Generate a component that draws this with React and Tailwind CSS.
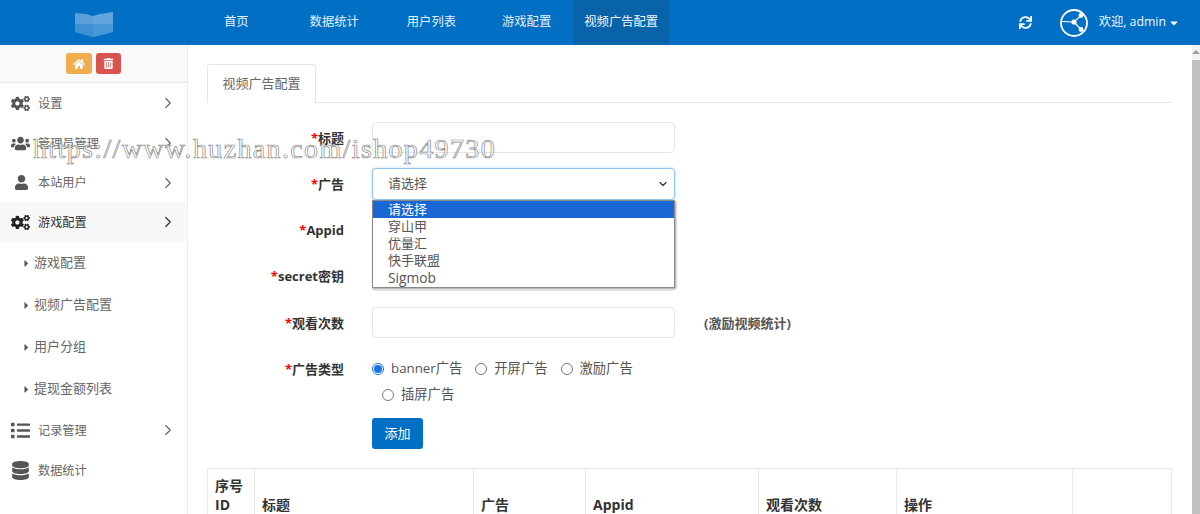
import React from 'react';
import { FaCogs, FaUsers, FaUser, FaList, FaDatabase, FaHome, FaTrashAlt, FaSync, FaCaretRight, FaCaretDown } from 'react-icons/fa';
import { ChevronRight, ChevronDown } from 'lucide-react';

const navItems = [
  { label: '首页', cls: 'ml-[111px]' },
  { label: '数据统计', cls: 'ml-[61px]' },
  { label: '用户列表', cls: 'ml-[48px]' },
  { label: '游戏配置', cls: 'ml-[46px]' },
];

function Logo() {
  return (
    <svg width="38" height="25" viewBox="0 0 38 25" className="shrink-0 ml-[75px] mt-[4px]">
      <path d="M0 1 L11 2 L18 4 L18 12 L0 12 Z" fill="#5a9fd9" />
      <path d="M18 4 L25 2 L38 0 L38 12 L18 12 Z" fill="#62a5dc" />
      <path d="M0 12 L18 12 L18 25 L10 23 L0 20 Z" fill="#3f90d3" />
      <path d="M18 12 L38 12 L38 20 L27 23 L18 25 Z" fill="#4897d6" />
    </svg>
  );
}

function ShareCircle() {
  return (
    <svg width="28" height="28" viewBox="0 0 28 28" fill="none" stroke="#fff">
      <circle cx="14" cy="14" r="13" strokeWidth="1.8" />
      <path d="M1.5 12.5 L14 13 L21 6.5 M14 13 L21 20.5" strokeWidth="1.1" />
      <circle cx="14" cy="13" r="2.6" fill="#fff" stroke="none" />
      <circle cx="21" cy="6.5" r="2.4" fill="#fff" stroke="none" />
      <circle cx="21" cy="20.5" r="2.4" fill="#fff" stroke="none" />
    </svg>
  );
}

function Header() {
  return (
    <div className="h-[45px] bg-[#006fc4] text-white flex items-center text-[12.3px] shrink-0">
      <Logo />
      {navItems.map((n) => (
        <span key={n.label} className={`${n.cls} opacity-90`}>{n.label}</span>
      ))}
      <span className="ml-[22px] h-full w-[96px] justify-center bg-[#0a63a8] flex items-center opacity-95">视频广告配置</span>
      <FaSync className="ml-auto text-[13px]" />
      <span className="ml-[28px]"><ShareCircle /></span>
      <span className="ml-[11px] mr-[20px] flex items-center gap-[2px] opacity-95">欢迎, admin <FaCaretDown className="text-[12px]" /></span>
    </div>
  );
}

const topMenu = [
  { label: '设置', icon: FaCogs, arrow: true },
  { label: '管理员管理', icon: FaUsers, arrow: true },
  { label: '本站用户', icon: FaUser, arrow: true, small: true, h: 'h-[39px]' },
];

function MenuRow({ label, icon: Icon, arrow, active, small, h = 'h-10' }) {
  return (
    <div className={`${h} flex items-center pl-[11px] pr-[10px] ${active ? 'bg-[#f8f8f8] text-[#333]' : 'text-[#666]'}`}>
      <span className="w-[27px] flex justify-start">
        <Icon className={`${small ? 'text-[15px] ml-[3px]' : 'text-[19px]'} ${active ? 'text-[#222]' : 'text-[#555]'}`} />
      </span>
      <span className="text-[12.2px] pt-[2px]">{label}</span>
      {arrow && <ChevronRight size={18} strokeWidth={1.6} className={`ml-auto ${active ? 'text-[#333]' : 'text-[#666]'}`} />}
    </div>
  );
}

function Sidebar() {
  return (
    <div className="w-[188px] shrink-0 border-r border-[#eeeeee] bg-white">
      <div className="h-[38px] bg-[#f9f9f9] border-b border-[#e6e6e6] flex justify-center items-start pt-2 gap-[4px] pr-[1px]">
        <span className="w-[26px] h-[21px] rounded-[3px] bg-[#f0ad4e] flex items-center justify-center text-white text-[12px]"><FaHome /></span>
        <span className="w-[25px] h-[21px] rounded-[3px] bg-[#d9534f] flex items-center justify-center text-white text-[11px]"><FaTrashAlt /></span>
      </div>
      {topMenu.map((m) => <MenuRow key={m.label} {...m} />)}
      <MenuRow label="游戏配置" icon={FaCogs} arrow active />
      {['游戏配置', '视频广告配置', '用户分组', '提现金额列表'].map((s) => (
        <div key={s} className="h-[42px] flex items-center pl-[21px] text-[13px] text-[#666]">
          <FaCaretRight className="text-[11px] mr-[2px] text-[#555]" />{s}
        </div>
      ))}
      <MenuRow label="记录管理" icon={FaList} arrow />
      <MenuRow label="数据统计" icon={FaDatabase} />
    </div>
  );
}

function Label({ text }) {
  return (
    <div className="w-[137px] pt-[2px] text-right font-bold text-[13px] text-[#333] shrink-0">
      <span className="text-[#f00]">*</span>{text}
    </div>
  );
}

function FormRow({ text, children, cls = 'h-[46px]' }) {
  return (
    <div className={`flex ${cls}`}>
      <div className="h-[31px] flex items-center"><Label text={text} /></div>
      <div className="ml-[28px] flex-1 relative flex items-start">{children}</div>
    </div>
  );
}

const inputCls = 'w-[303px] h-[31px] rounded-[4px] border border-[#e5e5e5] bg-white';

function Radio({ label, checked, cls = '' }) {
  return (
    <span className={`flex items-center gap-[7px] text-[13.3px] text-[#555] ${cls}`}>
      <span className={`w-[12px] h-[12px] rounded-full border bg-white flex items-center justify-center ${checked ? 'border-[#1a73e8]' : 'border-[#777]'}`}>
        {checked && <span className="w-[8px] h-[8px] rounded-full bg-[#1a73e8]" />}
      </span>
      {label}
    </span>
  );
}

function AdSelect() {
  return (
    <div className="relative">
      <div className="w-[303px] h-[32px] rounded-[4px] border border-[#8fc5ee] shadow-[0_0_3px_#b5d9f5] flex items-center pl-[15px] pr-[5px] text-[13px] text-[#555] bg-white">
        请选择
        <ChevronDown size={12} strokeWidth={2.4} className="ml-auto text-[#333]" />
      </div>
      <div className="absolute z-10 top-[32px] left-0 w-[303px] h-[88px] border border-[#8a8a8a] bg-white shadow-[1px_1px_2px_#999] text-[13px] leading-[17px] text-[#555]">
        <div className="bg-[#1967d2] text-white pl-[15px]">请选择</div>
        {['穿山甲', '优量汇', '快手联盟'].map((o) => (
          <div key={o} className="pl-[15px]">{o}</div>
        ))}
        <div className="pl-[15px] text-[13.8px]">Sigmob</div>
      </div>
    </div>
  );
}

const columns = [
  { w: 'w-[47px]', label: <>序号<br />ID</> },
  { w: 'w-[219px]', label: '标题' },
  { w: 'w-[112px]', label: '广告' },
  { w: 'w-[173px]', label: 'Appid' },
  { w: 'w-[138px]', label: '观看次数' },
  { w: 'w-[176px]', label: '操作' },
  { w: 'flex-1', label: '' },
];

function Main() {
  return (
    <div className="flex-1 min-w-0 pl-[19px] pr-[20px] pt-[19px]">
      <div className="h-[39px] border-b border-[#e5e5e5] flex">
        <div className="w-[109px] h-[39px] bg-white border border-b-0 border-[#e5e5e5] rounded-t-[3px] flex items-center justify-center text-[13px] text-[#666]">视频广告配置</div>
      </div>
      <div className="pt-[19px]">
        <FormRow text="标题"><div className={inputCls} /></FormRow>
        <FormRow text="广告"><AdSelect /></FormRow>
        <FormRow text="Appid"><div className={inputCls} /></FormRow>
        <FormRow text="secret密钥" cls="h-[47px]"><div className={inputCls} /></FormRow>
        <FormRow text="观看次数">
          <div className={inputCls} />
          <span className="ml-[29px] h-[31px] pt-[2px] flex items-center font-bold text-[13px] text-[#555]">(激励视频统计)</span>
        </FormRow>
        <div className="flex h-[65px]">
          <div className="h-[31px] flex items-center"><Label text="广告类型" /></div>
          <div className="ml-[28px] flex-1">
            <div className="flex h-[31px] items-center gap-[13px]">
              <Radio label="banner广告" checked />
              <Radio label="开屏广告" />
              <Radio label="激励广告" />
            </div>
            <Radio label="插屏广告" cls="ml-[10px] -mt-[2px] h-[25px]" />
          </div>
        </div>
        <div className="pl-[165px]">
          <div className="w-[51px] h-[31px] rounded-[3px] bg-[#006fc4] text-white text-[13px] flex items-center justify-center">添加</div>
        </div>
      </div>
      <div className="mt-[19px] h-[50px] border border-[#e8e8e8] flex">
        {columns.map((c, i) => (
          <div key={i} className={`${c.w} ${i < columns.length - 1 ? 'border-r border-[#e8e8e8]' : ''} px-[7px] flex items-end font-bold text-[14px] leading-[19px] text-[#333]`}>
            <div className="pb-[3px]">{c.label}</div>
          </div>
        ))}
      </div>
    </div>
  );
}

export default function App() {
  return (
    <div className="relative w-[1200px] h-[514px] overflow-hidden bg-white flex flex-col font-['Open_Sans','Noto_Sans_CJK_SC',sans-serif]">
      <Header />
      <div className="flex flex-1 min-h-0">
        <Sidebar />
        <Main />
        <div className="w-[8px] shrink-0 bg-[#f1f1f1] flex flex-col">
          <div className="h-[15px] flex justify-center pt-[5px]">
            <div className="w-0 h-0 border-x-[4px] border-x-transparent border-b-[4px] border-b-[#a0a0a0]" />
          </div>
          <div className="flex-1 bg-[#c1c1c1]" />
        </div>
      </div>
      <div className="absolute z-20 left-[33px] top-[132px] font-['Liberation_Serif',serif] text-[28px] leading-[34px] tracking-[1.36px] whitespace-nowrap text-white/60 [-webkit-text-stroke:0.7px_#8a8a8a]">
        https://www.huzhan.com/ishop49730
      </div>
    </div>
  );
}
